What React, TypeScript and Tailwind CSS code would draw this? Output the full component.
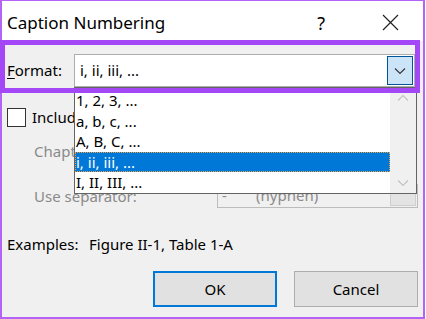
function Chevron({ className }: { className: string }) {
  return (
    <svg width="12" height="8" viewBox="0 0 12 8" className={className}>
      <path d="M1 1.5 L6 6.5 L11 1.5" fill="none" stroke="currentColor" strokeWidth="1.1" />
    </svg>
  );
}

const items = ["1, 2, 3, ...", "a, b, c, ...", "A, B, C, ...", "i, ii, iii, ...", "I, II, III, ..."];

export default function App() {
  return (
    <div className="w-[426px] h-[319px] bg-white" style={{ fontFamily: '"Noto Sans", "Open Sans", sans-serif' }}>
      <div className="relative w-[425px] h-[319px] border-l-2 border-r-2 border-b-2 border-t border-[#b364f7] bg-[#f0f0f0] flex flex-col">
        {/* title bar */}
        <div className="h-[40px] pt-[3px] bg-white flex items-center pl-[5px] pr-[24px] text-black">
          <span className="text-[17px] leading-none">Caption Numbering</span>
          <span className="ml-auto text-[18px] leading-none mr-[57px]">?</span>
          <svg width="17" height="17" viewBox="0 0 17 17">
            <path d="M1 1 L16 16 M16 1 L1 16" stroke="#222" strokeWidth="1.2" />
          </svg>
        </div>

        <div className="flex flex-col pl-[5px] text-[15px] text-black">
          {/* Format row */}
          <div className="flex items-center mt-[13px] h-[33px]">
            <span className="w-[67px]"><span className="underline underline-offset-2">F</span>ormat:</span>
            <div className="flex items-center w-[341px] h-[33px] bg-white border border-[#adadad]">
              <span className="pl-[5px]">i, ii, iii, ...</span>
              <div className="ml-auto mr-[1px] w-[26px] h-[29px] bg-[#cce4f7] border border-[#005499] flex items-center justify-center text-[#333]">
                <Chevron className="" />
              </div>
            </div>
          </div>

          {/* checkbox row, mostly hidden behind the open list */}
          <div className="flex items-center mt-[21px] h-[19px]">
            <div className="w-[19px] h-[19px] bg-white border border-[#333]" />
            <span className="ml-[6px] whitespace-nowrap">Include chapter number</span>
          </div>

          {/* chapter starts */}
          <div className="flex items-center mt-[13px] h-[23px] pl-[27px] text-[#8a8a8a]">
            <span className="w-[183px] whitespace-nowrap">Chapter starts with style</span>
            <div className="w-[200px] h-[23px] border border-[#bcbcbc]" />
          </div>

          {/* separator */}
          <div className="flex items-center mt-[21px] h-[23px] pl-[27px] text-[#8a8a8a]">
            <span className="w-[183px] pt-[1px]">Use separator:</span>
            <div className="flex items-center w-[201px] h-[24px] border border-[#bcbcbc]">
              <span className="pl-[4px] w-[38px]">-</span>
              <span>(hyphen)</span>
              <div className="ml-auto mr-[1px] w-[26px] h-[20px] bg-[#e3e3e3] border border-[#cfcfcf]" />
            </div>
          </div>

          {/* examples */}
          <div className="flex items-center mt-[26px] h-[22px]">
            <span className="w-[82px]">Examples:</span>
            <span>Figure II-1, Table 1-A</span>
          </div>

          {/* buttons */}
          <div className="flex mt-[16px] pl-[146px] gap-[17px]">
            <div className="w-[124px] h-[36px] bg-[#e1e1e1] border-2 border-[#0078d7] flex items-center justify-center">OK</div>
            <div className="w-[124px] h-[36px] bg-[#e1e1e1] border border-[#adadad] flex items-center justify-center">Cancel</div>
          </div>
        </div>

        {/* dropdown list overlay */}
        <div className="absolute left-[72px] top-[86px] w-[343px] h-[107px] bg-white border border-[#646464] flex text-[15px] text-black">
          <div className="flex-1 flex flex-col pt-[2px]">
            {items.map((it, i) => (
              <div
                key={it}
                className={
                  i === 3
                    ? "h-[20.5px] leading-[20px] pl-[1px] bg-[#0078d7] text-white outline-1 outline-dotted outline-[#f0a040] -outline-offset-1"
                    : "h-[20.5px] leading-[20px] pl-[1px]"
                }
              >
                {it}
              </div>
            ))}
          </div>
          <div className="w-[26px] bg-[#f0f0f0] flex flex-col items-center justify-between py-[6px] text-[#c2c2c2]">
            <Chevron className="rotate-180" />
            <Chevron className="" />
          </div>
        </div>

        {/* highlight annotation */}
        <div className="absolute left-[-2px] top-[39px] w-[420px] h-[53px] border-[5px] border-[#a447f7]" />
      </div>
    </div>
  );
}
